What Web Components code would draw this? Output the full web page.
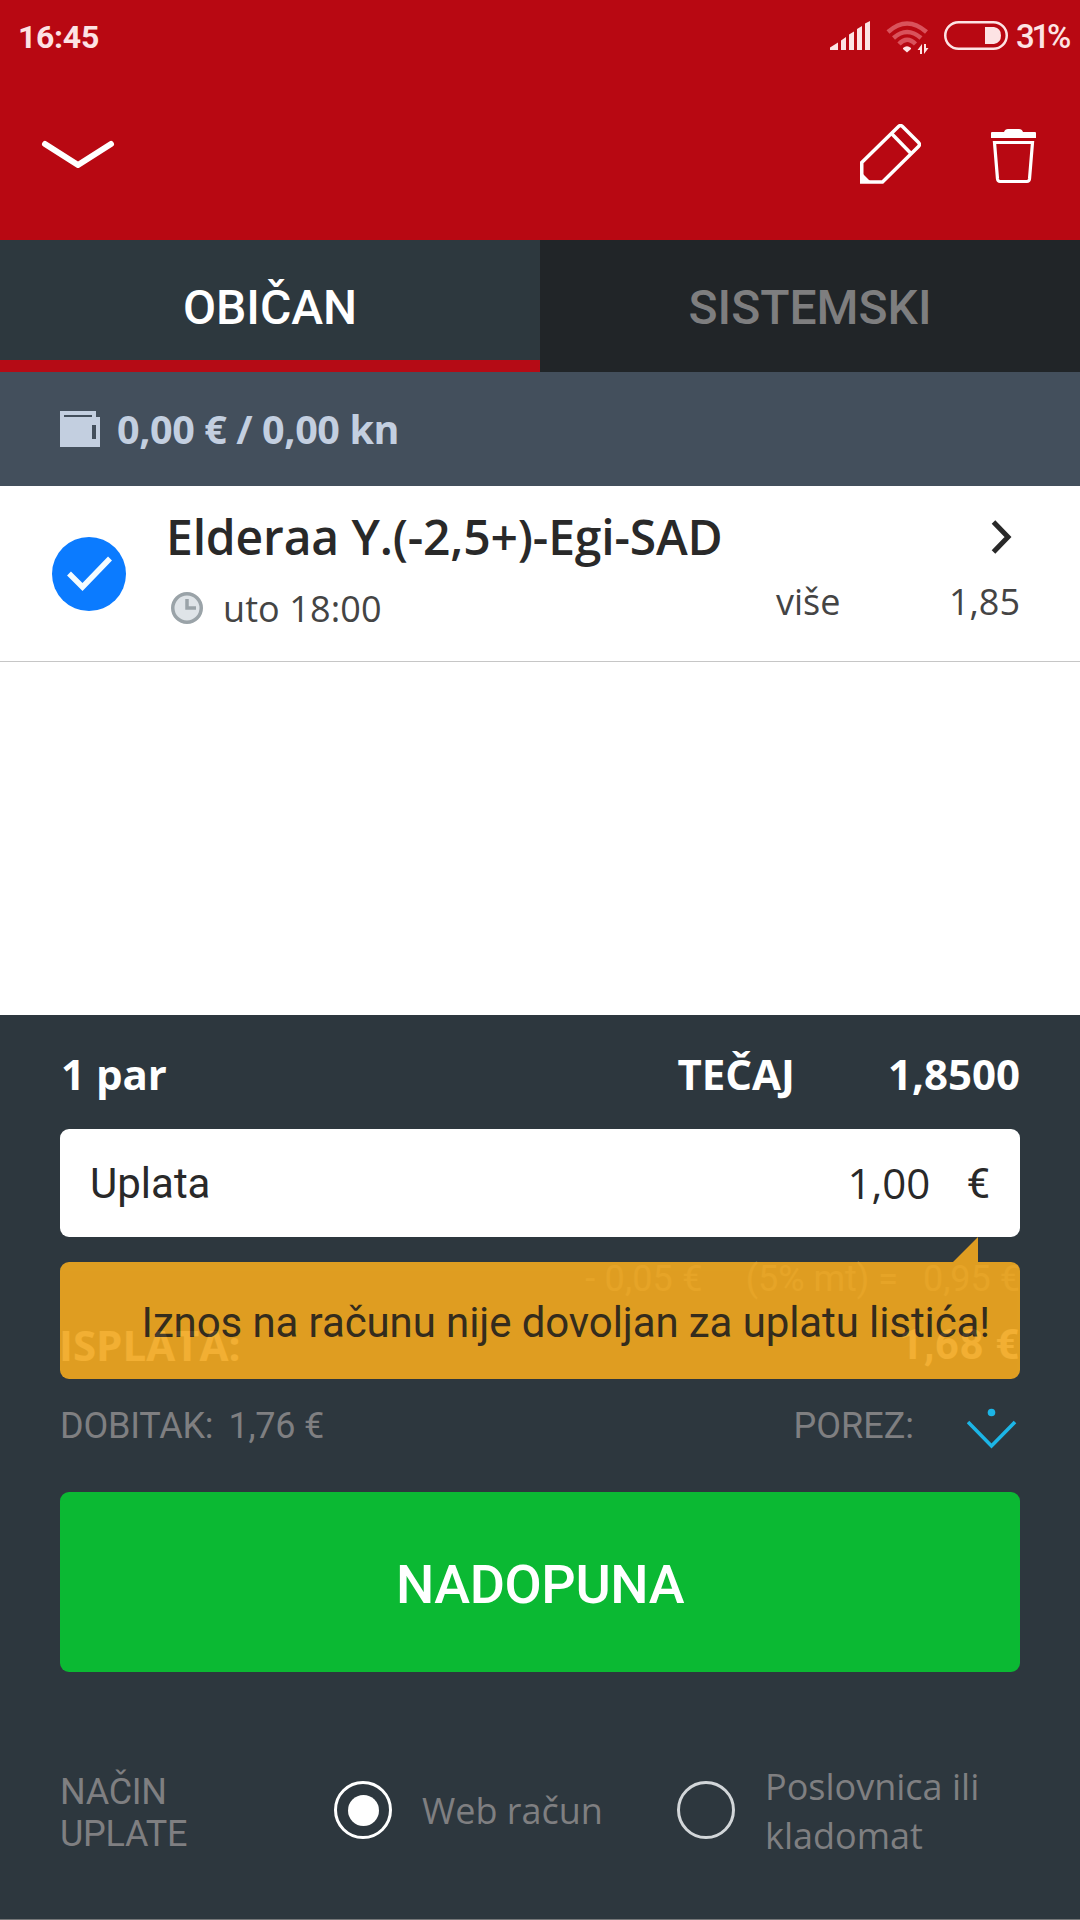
<!DOCTYPE html>
<html lang="hr">
<head>
  <meta charset="UTF-8">
  <title>Listić</title>
  <style>
    body {
      margin: 0;
      width: 1080px;
      height: 1920px;
      overflow: hidden;
      background: #fff;
      font-family: Roboto, sans-serif;
    }
  </style>
</head>
<body>
  <bet-slip></bet-slip>

  <script>
    // Attaches an open shadow root with the given markup
    class SlipElement extends HTMLElement {
      constructor() {
        super();
        this.attachShadow({ mode: 'open' });
        this.shadowRoot.innerHTML = this.template();
      }
    }

    class StatusBar extends SlipElement {
      template() {
        return `
          <style>
            :host {
              display: flex;
              justify-content: space-between;
              height: 51px;
              padding: 21px 8px 0 18px;
              background: #b80812;
              color: #fde3e4;
            }
            .time {
              font-size: 32px;
              font-weight: 700;
              line-height: 32px;
              letter-spacing: -0.3px;
            }
            .icons {
              display: flex;
              align-items: flex-start;
            }
            svg { display: block; }
            .wifi { margin-left: 16px; }
            .battery { margin-left: 14px; }
            .level {
              width: 56px;
              margin-left: 8px;
              font-size: 33px;
              font-weight: 500;
              line-height: 31px;
              letter-spacing: -3.2px;
              white-space: nowrap;
            }
          </style>
          <span class="time">16:45</span>
          <div class="icons">
            <svg width="40" height="29" viewBox="0 0 40 29" fill="currentColor">
              <path d="M0 29V26.500L8 21.500V29zM11 29V19.500L16 16V29zM19 29V13.500L24 10.500V29zM27 29V8L32 5V29zM35 29V2.500L40 0V29z"/>
            </svg>
            <svg class="wifi" width="44" height="34" viewBox="0 0 44 34">
              <g fill="none" stroke="#d9525b" stroke-width="4.500">
                <path d="M2 11Q21 -6 40.500 11"/>
                <path d="M7.500 17Q21 5 35 17"/>
                <path d="M13 23Q21 14.500 29.500 23"/>
              </g>
              <path fill="currentColor" d="M17 27Q21 23.500 25 27L25 28L21 31.500L17 28z"/>
              <path fill="currentColor" d="M36 23V33H34V29H31.500zM38 33V23H40V27H42.500z"/>
            </svg>
            <svg class="battery" width="64" height="29" viewBox="0 0 64 29">
              <rect x="1.250" y="1.250" width="61.500" height="26.500" rx="13.250" fill="none" stroke="currentColor" stroke-width="2.500"/>
              <path fill="currentColor" d="M41 6H50Q57 7 57 14.500Q57 22 50 23H41z"/>
            </svg>
            <span class="level">31%</span>
          </div>
        `;
      }
    }

    class SlipHeader extends SlipElement {
      template() {
        return `
          <style>
            :host {
              display: flex;
              height: 168px;
              background: #b80812;
              box-sizing: border-box;
              padding: 52px 42px 0 40px;
            }
            svg { display: block; }
            .close { margin: 16px auto 0 0; }
            .edit { margin-right: 70px; }
          </style>
          <svg class="close" width="76" height="30" viewBox="0 0 76 30" fill="none" stroke="#fff" stroke-width="6" stroke-linecap="round" stroke-linejoin="round">
            <path d="M5 4L38 25L71 4"/>
          </svg>
          <svg class="edit" width="64" height="62" viewBox="0 0 64 62" fill="none" stroke="#fff" stroke-width="3.500">
            <path d="M4.750 58V38.500L41.500 2.500Q43.500 .5 45.500 2.500L61.500 18.500Q63.500 20.500 61.500 22.500L25.500 58z"/>
            <path d="M35 10L53.500 29"/>
            <path d="M4 48L14 58H4z" fill="#fff" stroke="none"/>
          </svg>
          <svg width="47" height="62" viewBox="0 0 47 62">
            <path fill="#fff" d="M0 9Q0 8 1 8H13Q14 5 17 5H28Q31 5 32 8H44Q45 8 45 9V14H0z"/>
            <path fill="none" stroke="#fff" stroke-width="3.200" d="M3.500 18.500H41.500L38.500 55Q38 57.500 36 57.500H9Q7 57.500 6.500 55z"/>
          </svg>
        `;
      }
    }

    class SlipTab extends SlipElement {
      template() {
        return `
          <style>
            :host {
              flex: 1;
              display: flex;
              align-items: center;
              justify-content: center;
              padding-top: 2px;
              background: #212528;
              color: #7e7e7f;
              font-size: 48px;
              font-weight: 500;
            }
            :host([active]) {
              background: #2d383e;
              color: #fff;
              box-shadow: inset 0 -12px #b50b15;
            }
          </style>
          <slot></slot>
        `;
      }
    }

    class AccountBalance extends SlipElement {
      template() {
        return `
          <style>
            :host {
              display: flex;
              align-items: center;
              gap: 17px;
              height: 114px;
              padding-left: 60px;
              background: #434f5c;
              color: #c3cfe0;
              font: 700 39.500px "Open Sans", sans-serif;
              letter-spacing: -0.4px;
            }
            span { padding-bottom: 1px; }
          </style>
          <svg width="40" height="36" viewBox="0 0 40 36">
            <path fill="currentColor" d="M0 0H36V6H40V36H0z"/>
            <path fill="#434f5c" d="M4 4H32V6H4zM32 14H36V28H32z"/>
          </svg>
          <span><slot></slot></span>
        `;
      }
    }

    class SlipMatch extends SlipElement {
      template() {
        return `
          <style>
            :host {
              display: flex;
              box-sizing: border-box;
              height: 176px;
              padding: 0 60px 0 52px;
              border-bottom: 1px solid #c6c6c6;
              color: #444;
              font: 36px/49px "Open Sans", sans-serif;
            }
            svg { display: block; }
            .mark { margin: 51px 40px 0 0; }
            .info { flex: 1; padding-top: 18px; }
            .title {
              color: #292929;
              font-size: 48px;
              font-weight: 600;
              line-height: 65px;
              letter-spacing: -0.150px;
              white-space: nowrap;
            }
            .time {
              display: flex;
              align-items: center;
              gap: 20px;
              margin-top: 15px;
              padding-left: 5px;
              letter-spacing: 0.1px;
            }
            .time svg { margin-bottom: 1px; }
            .odds {
              width: 244px;
              display: grid;
              grid-template: 83px 49px / 1fr auto;
              padding-top: 8px;
            }
            .more { grid-column: 2; justify-self: end; margin: 24px 5px 0 0; }
          </style>
          <svg class="mark" width="74" height="74" viewBox="0 0 74 74">
            <circle cx="37" cy="37" r="37" fill="#0b7bff"/>
            <path d="M17 36.500L30.500 50L58 21.500" fill="none" stroke="#f4fcff" stroke-width="5.500"/>
          </svg>
          <div class="info">
            <div class="title"><slot name="title"></slot></div>
            <div class="time">
              <svg width="32" height="32" viewBox="0 0 32 32">
                <circle cx="16" cy="16" r="14.250" fill="#dfe4e8" stroke="#9aa3a8" stroke-width="3.500"/>
                <path d="M16 7V16H25" fill="none" stroke="#9aa3a8" stroke-width="3.500"/>
              </svg>
              <slot name="time"></slot>
            </div>
          </div>
          <div class="odds">
            <svg class="more" width="24" height="38" viewBox="0 0 24 38" fill="none" stroke="#292929" stroke-width="5">
              <path d="M2.500 4L17 19L2.500 34"/>
            </svg>
            <slot name="pick"></slot>
            <slot name="odd"></slot>
          </div>
        `;
      }
    }

    class SlipTotals extends SlipElement {
      template() {
        return `
          <style>
            :host {
              display: flex;
              align-items: center;
              box-sizing: border-box;
              height: 114px;
              padding: 3px 0 0 1px;
              color: #fff;
              font: 700 42px "Open Sans", sans-serif;
            }
            .pairs { flex: 1; }
            .odds { width: 225px; text-align: right; }
          </style>
          <span class="pairs"><slot name="pairs"></slot></span>
          <span><slot name="label"></slot></span>
          <span class="odds"><slot name="odds"></slot></span>
        `;
      }
    }

    class StakeField extends SlipElement {
      template() {
        return `
          <style>
            :host {
              display: flex;
              align-items: center;
              height: 108px;
              padding: 0 30px;
              border-radius: 9px;
              background: #fff;
              color: #292929;
              font-size: 42px;
            }
            .amount {
              margin: 0 36px 2px auto;
              font-family: "Open Sans", sans-serif;
            }
          </style>
          <span>Uplata</span>
          <span class="amount"><slot></slot></span>
          <span>€</span>
        `;
      }
    }

    // Warning bubble that lies over the payout rows
    class SlipNotice extends SlipElement {
      template() {
        return `
          <style>
            :host {
              position: absolute;
              top: 0;
              left: 0;
              right: 0;
              opacity: 0.91;
              color: #352b1a;
              font-size: 42px;
            }
            .arrow {
              width: 25px;
              height: 25px;
              margin-left: 893px;
              background: #f1a81f;
              clip-path: polygon(100% 0, 100% 100%, 0 100%);
            }
            .bubble {
              height: 117px;
              padding-right: 30px;
              border-radius: 9px;
              background: #f1a81f;
              line-height: 121px;
              letter-spacing: -0.1px;
              text-align: right;
              white-space: nowrap;
            }
          </style>
          <div class="arrow"></div>
          <div class="bubble"><slot></slot></div>
        `;
      }
    }

    class SlipPayout extends SlipElement {
      template() {
        return `
          <style>
            :host {
              display: block;
              position: relative;
              height: 255px;
              color: #7f7f81;
              font-size: 36px;
            }
            div { display: flex; line-height: 42px; }
            .fee { justify-content: flex-end; padding-top: 21px; }
            .fee span:first-child { letter-spacing: 0.2px; }
            .fee span + span { margin-left: 43px; }
            .fee span + span + span { margin-left: 25px; }
            .payout {
              justify-content: space-between;
              margin-top: 16px;
              color: #fff;
              font-size: 42px;
              font-weight: 700;
              line-height: 57px;
            }
            .payout span:first-child {
              font-family: "Open Sans", sans-serif;
              margin-left: -1px;
            }
            .payout span + span { letter-spacing: 0.6px; }
            .win { margin-top: 32px; letter-spacing: -0.2px; }
            .amount { margin-left: 15px; }
            .tax { margin-left: auto; margin-right: 53px; letter-spacing: 0; }
            svg { margin-right: 1px; }
          </style>
          <div class="fee"><span>- 0,05 €</span><span>(5% mt) =</span><span>0,95 €</span></div>
          <div class="payout"><span>ISPLATA:</span><span>1,68 €</span></div>
          <div class="win">
            <span>DOBITAK:</span>
            <span class="amount">1,76 €</span>
            <span class="tax">POREZ:</span>
            <svg width="52" height="48" viewBox="0 0 52 48">
              <circle cx="24.500" cy="7.500" r="3.800" fill="#1cb5e6"/>
              <path d="M1 17L24.500 41L48 17" fill="none" stroke="#1cb5e6" stroke-width="3.600"/>
            </svg>
          </div>
          <slot></slot>
        `;
      }
    }

    class SlipButton extends SlipElement {
      template() {
        return `
          <style>
            :host {
              display: flex;
              align-items: center;
              justify-content: center;
              box-sizing: border-box;
              height: 180px;
              padding-top: 4px;
              border-radius: 9px;
              background: #0bb933;
              color: #fff;
              font-size: 54px;
              font-weight: 500;
              letter-spacing: -0.4px;
            }
          </style>
          <slot></slot>
        `;
      }
    }

    class RadioOption extends SlipElement {
      template() {
        return `
          <style>
            :host {
              display: flex;
              align-items: center;
              gap: 30px;
              font: 36px/49px "Open Sans", sans-serif;
            }
            .ring {
              flex: none;
              display: flex;
              align-items: center;
              justify-content: center;
              box-sizing: border-box;
              width: 58px;
              height: 58px;
              border: 3px solid #d2d6d9;
              border-radius: 50%;
            }
            :host([checked]) .ring { border-color: #fff; }
            :host([checked]) .ring::after {
              content: "";
              width: 31px;
              height: 31px;
              border-radius: 50%;
              background: #fff;
            }
            :host([multiline]) .text { padding-top: 2px; }
          </style>
          <span class="ring"></span>
          <span class="text"><slot></slot></span>
        `;
      }
    }

    class PaymentMethod extends SlipElement {
      template() {
        return `
          <style>
            :host {
              display: grid;
              grid-template-columns: 274px 343px 1fr;
              align-items: center;
              height: 100px;
              margin-top: 88px;
              color: #7f7f81;
              white-space: nowrap;
            }
            .label {
              padding-top: 5px;
              font-size: 36px;
              line-height: 42px;
              letter-spacing: -0.3px;
            }
          </style>
          <span class="label">NAČIN<br>UPLATE</span>
          <slot></slot>
        `;
      }
    }

    class BetSlip extends SlipElement {
      template() {
        return `
          <style>
            :host {
              display: flex;
              flex-direction: column;
              width: 1080px;
              height: 1920px;
            }
            .tabs { display: flex; height: 132px; }
            .list { flex: 1; }
            .footer {
              box-sizing: border-box;
              height: 905px;
              padding: 0 60px;
              background: #2d373e;
              border-bottom: 1px solid #747677;
            }
          </style>
          <status-bar></status-bar>
          <slip-header></slip-header>
          <div class="tabs">
            <slip-tab active>OBIČAN</slip-tab>
            <slip-tab>SISTEMSKI</slip-tab>
          </div>
          <account-balance>0,00 € / 0,00 kn</account-balance>
          <div class="list">
            <slip-match>
              <span slot="title">Elderaa Y.(-2,5+)-Egi-SAD</span>
              <span slot="time">uto 18:00</span>
              <span slot="pick">više</span>
              <span slot="odd">1,85</span>
            </slip-match>
          </div>
          <div class="footer">
            <slip-totals>
              <span slot="pairs">1 par</span>
              <span slot="label">TEČAJ</span>
              <span slot="odds">1,8500</span>
            </slip-totals>
            <stake-field>1,00</stake-field>
            <slip-payout>
              <slip-notice>Iznos na računu nije dovoljan za uplatu listića!</slip-notice>
            </slip-payout>
            <slip-button>NADOPUNA</slip-button>
            <payment-method>
              <radio-option checked>Web račun</radio-option>
              <radio-option multiline>Poslovnica ili<br>kladomat</radio-option>
            </payment-method>
          </div>
        `;
      }
    }

    customElements.define('status-bar', StatusBar);
    customElements.define('slip-header', SlipHeader);
    customElements.define('slip-tab', SlipTab);
    customElements.define('account-balance', AccountBalance);
    customElements.define('slip-match', SlipMatch);
    customElements.define('slip-totals', SlipTotals);
    customElements.define('stake-field', StakeField);
    customElements.define('slip-notice', SlipNotice);
    customElements.define('slip-payout', SlipPayout);
    customElements.define('slip-button', SlipButton);
    customElements.define('radio-option', RadioOption);
    customElements.define('payment-method', PaymentMethod);
    customElements.define('bet-slip', BetSlip);
  </script>
</body>
</html>
